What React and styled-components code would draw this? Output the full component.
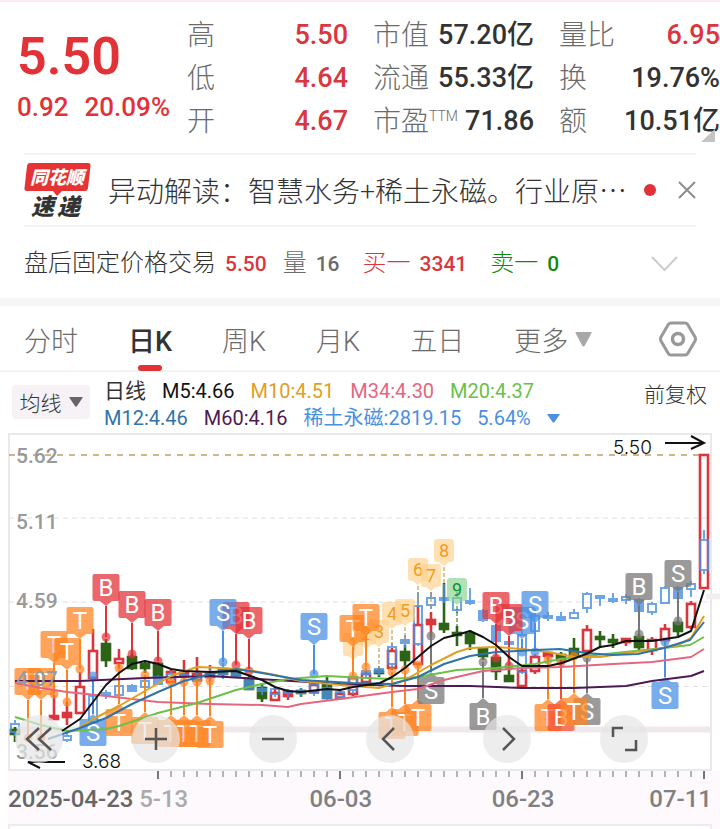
import React from 'react'
import styled, { createGlobalStyle, css } from 'styled-components'

const RED = '#e23237'
const UP = '#d9363e'
const DOWN = '#2c6316'
const BLUE = '#4a8fe2'
const ORANGE = '#ff8420'
const GREY = '#6b6b6b'
const INK = '#333'
const LINE = '#f3f3f3'

const GlobalStyle = createGlobalStyle`
  * {
    box-sizing: border-box;
  }
  body {
    margin: 0;
    background: #fff;
    color: ${INK};
    font-family: Roboto, 'Noto Sans CJK SC', sans-serif;
  }
  button {
    padding: 0;
    border: 0;
    background: none;
    color: inherit;
    font: inherit;
    cursor: pointer;
  }
`

const Page = styled.main`
  border-top: 2px solid #fdeaee;
  overflow: hidden;
`

const Quote = styled.section`
  display: grid;
  grid-template-columns: 145fr 161fr 161fr 161fr;
  column-gap: 25px;
  padding: 12px 0 10px 17px;
`

const PriceBox = styled.div`
  min-width: 0;
  color: ${RED};
  white-space: nowrap;
`

const Price = styled.h1`
  margin: 15px 0 0;
  font-size: 52px;
  line-height: 56px;
  font-weight: 600;
`

const Change = styled.p`
  display: flex;
  gap: 16px;
  margin: 6px 0 0;
  font-size: 26px;
  line-height: 32px;
  font-weight: 500;
`

const Stats = styled.dl`
  margin: 0;
`

const Stat = styled.div`
  display: flex;
  justify-content: space-between;
  height: 43px;
  line-height: 43px;
  white-space: nowrap;
`

const StatName = styled.dt`
  color: ${GREY};
  font-size: 28px;
  font-weight: 300;

  sup {
    font-size: 14px;
    line-height: 14px;
    vertical-align: 10px;
  }
`

const StatValue = styled.dd`
  margin: 0;
  color: ${(p) => (p.$up ? UP : INK)};
  font-size: 27px;
  font-weight: 500;
`

const Corner = styled.svg`
  position: absolute;
  right: 5px;
  top: 129px;
`

const News = styled.section`
  display: flex;
  align-items: center;
  height: 74px;
  margin: 0 24px;
  border-top: 2px solid ${LINE};
  border-bottom: 2px solid ${LINE};
`

const NewsText = styled.a`
  flex: 1;
  min-width: 0;
  margin-left: 17px;
  overflow: hidden;
  color: ${INK};
  font-family: 'Noto Sans CJK SC', sans-serif;
  font-size: 28px;
  line-height: 40px;
  font-weight: 300;
  white-space: nowrap;
  text-decoration: none;
`

const Dot = styled.span`
  width: 12px;
  height: 12px;
  margin: 0 22px 0 12px;
  border-radius: 50%;
  background: ${RED};
`

const IconButton = styled.button`
  display: flex;
  align-items: center;
  justify-content: center;
`

const AfterHours = styled.section`
  display: flex;
  align-items: center;
  height: 71px;
  padding: 2px 42px 0 24px;
  font-size: 24px;
  line-height: 32px;
  font-weight: 300;
  white-space: nowrap;

  b {
    font-size: 21px;
    font-weight: 500;
  }
`

const Field = styled.span`
  display: flex;
  align-items: baseline;
  gap: 9px;
  margin-right: ${(p) => (p.$wide ? 23 : 16)}px;
  color: ${(p) => p.$color};
`

const Amount = styled.b`
  color: ${(p) => p.$color};
`

const Band = styled.div`
  height: 8px;
  background: #f6f6f6;
`

const Tabs = styled.nav`
  display: flex;
  align-items: center;
  gap: 50px;
  height: 66px;
  padding: 2px 23px 0 24px;
  border-bottom: 2px solid ${LINE};
`

const Tab = styled.button`
  position: relative;
  display: flex;
  align-items: center;
  gap: 7px;
  height: 64px;
  color: ${GREY};
  font-size: 27px;
  font-weight: 300;
  white-space: nowrap;

  ${(p) =>
    p.$active &&
    css`
      color: ${INK};
      font-weight: 500;

      &::after {
        content: '';
        position: absolute;
        left: 50%;
        bottom: 0;
        width: 24px;
        height: 6px;
        margin-left: -12px;
        border-radius: 3px;
        background: ${RED};
      }
    `}
`

const Settings = styled(IconButton)`
  margin-left: auto;
`

const LegendBar = styled.section`
  display: flex;
  align-items: flex-start;
  height: 60px;
  padding: 6px 13px 0 12px;
`

const Indicator = styled.button`
  display: flex;
  flex: none;
  align-items: center;
  justify-content: center;
  gap: 7px;
  width: 78px;
  height: 34px;
  margin-top: 7px;
  border-radius: 4px;
  background: #f6f2f6;
  font-size: 21px;
  font-weight: 300;
`

const Averages = styled.div`
  flex: 1;
  margin-left: 14px;
  white-space: nowrap;
`

const AverageRow = styled.div`
  display: flex;
  align-items: center;
  gap: 16px;
  font-size: 20px;
  line-height: 27px;
`

const Average = styled.span`
  color: ${(p) => p.$color};
`

const Period = styled.span`
  font-size: 21px;
`

const Adjust = styled.button`
  height: 28px;
  font-size: 21px;
  font-weight: 300;
`

const ChartBox = styled.section`
  position: relative;
`

const ChartSvg = styled.svg`
  display: block;
  width: 100%;
  overflow: visible;
  font-family: Roboto, 'Noto Sans CJK SC', sans-serif;
`

const Controls = styled.div`
  position: absolute;
  left: 0;
  right: 0;
  bottom: 8px;
  display: flex;
  justify-content: space-between;
  padding: 0 72px 0 15px;
`

const RoundButton = styled(IconButton)`
  width: 48px;
  height: 48px;
  border-radius: 50%;
  background: rgba(230, 230, 230, 0.7);
`

const Axis = styled.footer`
  background: #fdf9fd;
  margin-left: 8px;
`

const Dates = styled.div`
  display: grid;
  grid-template-columns: 131fr 170fr 182fr 220fr;
  align-items: center;
  height: 40px;
  padding-right: 8px;
  color: #808080;
  font-size: 24px;
  line-height: 32px;
  font-weight: 500;
  white-space: nowrap;

  div {
    display: flex;
    justify-content: space-between;
  }
`

const DateText = styled.time`
  color: ${(p) => p.$color};
`

const NextPanel = styled.div`
  height: 5px;
  margin: 5px 8px 0 0;
  border: 2px solid #ececec;
  border-bottom: 0;
  background: #fff;
`

const STATS = [
  [
    ['高', '5.50', true],
    ['低', '4.64', true],
    ['开', '4.67', true],
  ],
  [
    ['市值', '57.20亿'],
    ['流通', '55.33亿'],
    ['市盈', '71.86'],
  ],
  [
    ['量比', '6.95', true],
    ['换', '19.76%'],
    ['额', '10.51亿'],
  ],
]

const TABS = ['分时', '日K', '周K', '月K', '五日']

const slot = (i) => 15 + 13 * i

// [slot, kind, high, body top, body bottom, low]; r: hollow rise, f: filled rise, g: fall
const CANDLES = [
  [0, 'g', 727, 730, 734, 742],
  [3, 'f', 695, 716, 719, 719],
  [4, 'f', 702, 713, 717, 725],
  [5, 'r', 672, 687, 713, 713],
  [6, 'r', 629, 651, 678, 678],
  [7, 'g', 639, 644, 660, 667],
  [8, 'r', 649, 659, 663, 669],
  [9, 'g', 652, 657, 668, 670],
  [10, 'g', 662, 664, 668, 673],
  [11, 'g', 662, 664, 676, 678],
  [12, 'r', 670, 672, 682, 684],
  [13, 'f', 660, 673, 676, 678],
  [14, 'r', 657, 674, 680, 682],
  [15, 'f', 665, 674, 677, 682],
  [16, 'g', 667, 670, 674, 678],
  [17, 'g', 668, 670, 675, 677],
  [18, 'g', 676, 679, 689, 690],
  [19, 'g', 683, 688, 698, 702],
  [20, 'r', 688, 693, 700, 701],
  [21, 'f', 689, 692, 696, 700],
  [22, 'g', 688, 691, 693, 697],
  [23, 'r', 682, 685, 692, 694],
  [24, 'g', 676, 685, 698, 699],
  [25, 'r', 690, 694, 698, 700],
  [26, 'r', 675, 678, 694, 696],
  [27, 'r', 670, 674, 682, 684],
  [28, 'g', 668, 671, 673, 677],
  [29, 'r', 648, 651, 668, 670],
  [30, 'g', 645, 652, 660, 668],
  [31, 'r', 606, 625, 664, 666],
  [32, 'f', 612, 620, 624, 637],
  [33, 'g', 583, 624, 629, 633],
  [34, 'g', 626, 633, 635, 646],
  [35, 'g', 630, 634, 643, 650],
  [36, 'g', 647, 649, 656, 660],
  [37, 'g', 655, 658, 671, 680],
  [38, 'g', 655, 676, 681, 682],
  [39, 'r', 669, 671, 686, 687],
  [40, 'r', 654, 657, 671, 674],
  [41, 'f', 652, 653, 656, 661],
  [42, 'g', 652, 655, 659, 662],
  [43, 'g', 638, 649, 655, 658],
  [44, 'r', 625, 630, 651, 655],
  [45, 'g', 631, 637, 639, 648],
  [46, 'g', 634, 640, 642, 648],
  [47, 'f', 638, 639, 642, 646],
  [48, 'g', 634, 637, 647, 650],
  [49, 'r', 637, 640, 650, 655],
  [50, 'r', 624, 629, 640, 642],
  [51, 'g', 620, 623, 631, 636],
  [52, 'r', 601, 604, 627, 629],
  [53, 'r', 455, 455, 588, 588],
]

// sector index overlay; h: hollow, s: solid
const SECTOR = [
  [0, 'h', 720, 724, 732, 736],
  [4, 'h', 733, 736, 740, 742],
  [6, 'h', 680, 696, 722, 724],
  [7, 's', 690, 693, 695, 699],
  [8, 'h', 682, 686, 695, 699],
  [9, 's', 684, 686, 691, 692],
  [10, 'h', 677, 681, 687, 690],
  [11, 's', 675, 677, 684, 685],
  [12, 'h', 671, 674, 678, 680],
  [13, 's', 670, 675, 677, 680],
  [14, 'h', 671, 677, 681, 684],
  [15, 's', 668, 675, 677, 680],
  [16, 's', 663, 670, 674, 679],
  [17, 's', 670, 672, 676, 678],
  [18, 's', 677, 679, 689, 690],
  [19, 's', 686, 689, 691, 695],
  [20, 'h', 687, 689, 694, 697],
  [21, 's', 689, 691, 693, 697],
  [22, 's', 688, 691, 693, 697],
  [23, 'h', 682, 684, 693, 696],
  [24, 's', 684, 688, 698, 700],
  [25, 'h', 689, 692, 697, 699],
  [26, 'h', 674, 677, 690, 694],
  [27, 's', 668, 671, 674, 678],
  [28, 's', 666, 669, 672, 676],
  [29, 'h', 643, 647, 664, 667],
  [30, 's', 635, 640, 643, 648],
  [31, 'h', 592, 606, 644, 646],
  [32, 'h', 592, 598, 605, 609],
  [33, 's', 584, 598, 600, 603],
  [34, 'h', 592, 598, 610, 613],
  [35, 's', 588, 601, 603, 605],
  [36, 's', 609, 611, 620, 622],
  [37, 's', 624, 626, 641, 643],
  [38, 's', 641, 642, 644, 645],
  [39, 'h', 631, 635, 672, 674],
  [40, 'h', 610, 616, 631, 633],
  [41, 's', 612, 616, 618, 621],
  [42, 's', 612, 617, 620, 621],
  [43, 'h', 609, 613, 618, 619],
  [44, 'h', 592, 594, 608, 613],
  [45, 's', 595, 596, 598, 606],
  [46, 's', 593, 599, 601, 603],
  [47, 'h', 594, 597, 600, 604],
  [48, 's', 598, 600, 611, 612],
  [49, 'h', 602, 604, 612, 615],
  [50, 'h', 586, 588, 603, 604],
  [51, 's', 586, 588, 598, 599],
  [52, 'h', 581, 584, 589, 597],
  [53, 'h', 530, 540, 570, 574],
]

const AVERAGES = [
  ['#4d1a55', '15,681 80,681 145,678 210,676 275,680 340,684 405,686 470,686 522,688 574,688 626,686 652,681 691,676 704,671'],
  ['#e5677f', '15,683 41,688 67,692 106,696 158,702 210,704 262,705 288,707 301,704 340,699 392,692 418,689 444,680 483,671 522,668 561,667 613,664 652,662 691,657 704,649'],
  ['#6cc04a', '15,717 41,725 67,731 106,729 119,726 158,713 197,703 236,690 262,684 288,679 327,676 366,678 392,679 418,677 457,670 496,668 535,664 561,659 586,656 625,652 664,648 690,645 704,637'],
  ['#e0a020', '80,727 93,719 119,706 145,691 171,676 197,667 223,668 249,670 275,675 301,681 340,685 379,688 405,680 431,665 457,652 470,648 496,647 522,649 548,652 574,657 600,657 626,653 652,650 678,645 691,638 704,616'],
  ['#2f74a8', '48,739 80,728 106,718 132,704 158,692 184,681 210,674 236,669 262,673 301,680 353,683 392,684 418,677 444,664 470,656 496,652 535,650 560,649 586,653 612,655 638,654 664,648 690,640 704,622'],
  ['#111', '62,731 80,719 93,702 106,685 119,673 132,664 145,661 158,664 171,669 184,671 210,672 236,671 262,680 275,687 288,691 301,692 327,689 340,690 353,687 380,683 392,677 405,668 418,657 431,646 444,638 460,634 470,631 483,637 496,645 509,657 522,666 548,666 562,663 586,654 600,647 613,645 626,641 652,641 678,637 691,631 704,590'],
]

// [slot, letter, colour, top of the tag, price end of the stem]
const TAGS = [
  [1, 'T', ORANGE, 668, 738],
  [2, 'T', ORANGE, 668, 738],
  [3, 'T', ORANGE, 631, 694],
  [4, 'T', ORANGE, 638, 702],
  [5, 'T', ORANGE, 607, 669],
  [6, 'S', BLUE, 719, 676],
  [8, 'T', ORANGE, 709, 668],
  [10, 'T', ORANGE, 717, 675],
  [12, 'T', ORANGE, 720, 682],
  [13, 'T', ORANGE, 720, 682],
  [14, 'T', ORANGE, 720, 682],
  [15, 'T', ORANGE, 721, 681],
  [7, 'B', RED, 574, 637],
  [9, 'B', RED, 591, 654],
  [11, 'B', RED, 599, 661],
  [17, 'B', RED, 602, 665],
  [16, 'S', BLUE, 599, 662],
  [18, 'B', RED, 607, 671],
  [23, 'S', BLUE, 613, 674],
  [26, 'T', ORANGE, 615, 676],
  [27, 'T', ORANGE, 604, 667],
  [29, 'T', ORANGE, 712, 672],
  [30, 'T', ORANGE, 709, 670],
  [31, 'T', ORANGE, 704, 665],
  [32, 'S', '#777', 677, 636],
  [36, 'B', '#777', 703, 662],
  [37, 'B', RED, 592, 658],
  [39, 'S', BLUE, 607, 652],
  [38, 'B', RED, 604, 666],
  [40, 'S', BLUE, 591, 652],
  [41, 'T', ORANGE, 704, 660],
  [42, 'B', '#f5502f', 704, 662],
  [44, 'S', '#777', 698, 658],
  [43, 'T', ORANGE, 698, 656],
  [48, 'B', '#777', 573, 634],
  [51, 'S', '#777', 560, 621],
  [50, 'S', BLUE, 682, 642],
]

const COUNTS = [
  [26, '1', 633, 675],
  [27, '2', 622, 668],
  [28, '3', 620, 670],
  [29, '4', 602, 648],
  [30, '5', 599, 645],
  [31, '6', 558, 606],
  [32, '7', 564, 610],
  [33, '8', 539, 585],
  [34, '9', 578, 634],
]

const PRICES = [
  ['5.62', 463],
  ['5.11', 529],
  ['4.59', 608],
  ['4.07', 686],
  ['3.56', 759],
]

const Candle = ({ x, color, width, stroke, hollow, high, top, bottom, low }) => (
  <g stroke={color} strokeWidth={stroke}>
    <path d={`M${x} ${high}V${top}M${x} ${bottom}V${low}`} />
    <rect
      x={x - width / 2}
      y={top}
      width={width}
      height={Math.max(bottom - top, 1)}
      fill={hollow ? 'none' : color}
    />
  </g>
)

const Tag = ({ x, letter, color, top, end }) => {
  const above = top < end
  const edge = above ? top + 27 : top
  const tip = above ? edge + 5 : edge - 5
  return (
    <g>
      <path d={`M${x} ${tip}V${end}`} stroke={color} strokeWidth="2" />
      <circle cx={x} cy={end} r="4.5" fill={color} opacity="0.7" />
      <rect x={x - 13.5} y={top} width="27" height="27" rx="2" fill={color} opacity="0.74" />
      <path d={`M${x - 6} ${edge}L${x} ${tip}L${x + 6} ${edge}Z`} fill={color} opacity="0.74" />
      <text x={x} y={top + 22} fill="#fff" fontSize="24" textAnchor="middle">
        {letter}
      </text>
    </g>
  )
}

const Count = ({ x, value, top, end }) => {
  const green = value === '9'
  const fill = green ? '#86d38f' : '#ffd08a'
  return (
    <g>
      <path
        d={`M${x} ${top + 28}V${end}`}
        stroke={green ? DOWN : '#b8902c'}
        strokeDasharray="4 2"
      />
      <rect x={x - 10} y={top} width="20" height="23" rx="3" fill={fill} opacity="0.65" />
      <path d={`M${x - 5} ${top + 23}l5 4l5 -4z`} fill={fill} opacity="0.65" />
      <text x={x} y={top + 18} fill={green ? '#12912c' : '#ee9c20'} fontSize="18" textAnchor="middle">
        {value}
      </text>
    </g>
  )
}

const Chart = () => (
  <ChartSvg viewBox="0 432 720 339" role="img" aria-label="日K线图">
    <g fill="none">
      <path d="M9 771V434H711V771M9 770H711" stroke="#e9e9ea" strokeWidth="2" />
      <path d="M9 518H711M9 602H711M9 686.5H711" stroke="#dededf" strokeDasharray="5 4" />
      <path d="M9 729.5H711" stroke="#efe9ee" strokeWidth="6" />
      <path d="M706 596.5H720" stroke="#f3eef2" strokeWidth="6" />
      <path d="M9 455H704" stroke="#c69c60" strokeWidth="1.5" strokeDasharray="6 6" />
    </g>

    {CANDLES.map(([i, kind, high, top, bottom, low]) => (
      <Candle
        key={i}
        x={slot(i)}
        color={kind === 'g' ? DOWN : UP}
        width={8}
        stroke={2.6}
        hollow={kind === 'r'}
        high={high}
        top={top}
        bottom={bottom}
        low={low}
      />
    ))}
    <g opacity="0.8">
      {SECTOR.map(([i, kind, high, top, bottom, low]) => (
        <Candle
          key={i}
          x={slot(i)}
          color={BLUE}
          width={8}
          stroke={2}
          hollow={kind === 'h'}
          high={high}
          top={top}
          bottom={bottom}
          low={low}
        />
      ))}
    </g>

    {COUNTS.map(([i, value, top, end]) => (
      <Count key={i} x={slot(i)} value={value} top={top} end={end} />
    ))}
    {TAGS.map(([i, letter, color, top, end]) => (
      <Tag key={i} x={slot(i)} letter={letter} color={color} top={top} end={end} />
    ))}
    {AVERAGES.map(([color, points]) => (
      <polyline
        key={color}
        points={points}
        fill="none"
        stroke={color}
        strokeWidth="2"
        strokeLinejoin="round"
      />
    ))}

    <g fill="#999" fontSize="21" fontWeight="500">
      {PRICES.map(([label, y]) => (
        <text key={label} x="16" y={y}>
          {label}
        </text>
      ))}
    </g>
    <g fill="#111" fontSize="19" fontFamily="Inter, sans-serif" fontWeight="300">
      <text x="613" y="454">
        5.50
      </text>
      <text x="82" y="768">
        3.68
      </text>
    </g>
    <g fill="none" stroke="#111" strokeWidth="2">
      <path d="M665 443H704M691 436L704 443L691 449" />
      <path d="M65 762H28L40 768" />
    </g>
  </ChartSvg>
)

const Caret = ({ width, height, color }) => (
  <svg width={width} height={height} viewBox="0 0 16 14" preserveAspectRatio="none" aria-hidden="true">
    <path d="M1 0H15Q16 0 15.5 1L9 13Q8 14 7 13L.5 1Q0 0 1 0Z" fill={color} />
  </svg>
)

const CONTROLS = [
  ['最早', 'M24 13L12 24L24 35M36 13L24 24L36 35'],
  ['放大', 'M13 24H35M24 13V35'],
  ['缩小', 'M13 24H35'],
  ['向左', 'M28 13L17 24L28 35'],
  ['向右', 'M20 13L31 24L20 35'],
  ['全屏', 'M13 22V13H23M36 25V35H25'],
]

const Ticks = () => (
  <ChartSvg viewBox="8 771 712 8" aria-hidden="true">
    {Array.from({ length: 43 }, (_, n) => (
      <path
        key={n}
        d={`M${158 + 13 * n} 771v${n % 14 === 0 ? 8 : 6}`}
        stroke={n % 14 === 0 ? '#777' : '#b5b3b5'}
        strokeWidth="2"
      />
    ))}
  </ChartSvg>
)

const App = () => {
  return (
    <Page>
      <GlobalStyle />

      <Quote>
        <PriceBox>
          <Price>5.50</Price>
          <Change>
            <span>0.92</span>
            <span>20.09%</span>
          </Change>
        </PriceBox>
        {STATS.map((group, n) => (
          <Stats key={n}>
            {group.map(([name, value, up]) => (
              <Stat key={name}>
                <StatName>
                  {name}
                  {name === '市盈' && <sup>TTM</sup>}
                </StatName>
                <StatValue $up={up}>{value}</StatValue>
              </Stat>
            ))}
          </Stats>
        ))}
      </Quote>
      <Corner width="14" height="13" aria-hidden="true">
        <path d="M14 0V13H0Z" fill="#c4c4c4" />
      </Corner>

      <News>
        <svg width="67" height="64" viewBox="0 -3 67 64" role="img" aria-label="同花顺速递">
          <path d="M6 2H64Q67 2 66.5 5L64 27Q63.5 30 61 30H38L33 35L29 30H3Q0 30 .5 27L3 5Q3.5 2 6 2Z" fill="#e63434" />
          <g fontFamily="'Noto Sans CJK SC', sans-serif" fontWeight="900" fontStyle="italic">
            <text x="6" y="23" fill="#fff" fontSize="18">
              同花顺
            </text>
            <text x="7" y="54" fill={INK} fontSize="23">
              速
            </text>
            <text x="33" y="54" fill={INK} fontSize="23">
              递
            </text>
          </g>
        </svg>
        <NewsText href="#news">异动解读：智慧水务+稀土永磁。行业原…</NewsText>
        <Dot />
        <IconButton aria-label="关闭">
          <svg width="18" height="18" viewBox="0 0 18 18">
            <path d="M1 1L17 17M17 1L1 17" stroke="#8c8c8c" strokeWidth="2" />
          </svg>
        </IconButton>
      </News>

      <AfterHours>
        <Field $color={INK}>
          盘后固定价格交易
          <Amount $color={UP}>5.50</Amount>
        </Field>
        <Field $color={GREY} $wide>
          量<Amount>16</Amount>
        </Field>
        <Field $color={UP} $wide>
          买一<Amount>3341</Amount>
        </Field>
        <Field $color="#128a12">
          卖一<Amount>0</Amount>
        </Field>
        <Settings aria-label="展开">
          <svg width="27" height="16" viewBox="0 0 27 16">
            <path d="M1 1L13.5 14L26 1" fill="none" stroke="#ccc" strokeWidth="2" />
          </svg>
        </Settings>
      </AfterHours>
      <Band />

      <Tabs>
        {TABS.map((name) => (
          <Tab key={name} $active={name === '日K'}>
            {name}
          </Tab>
        ))}
        <Tab>
          更多
          <Caret width={17} height={15} color="#a9a7aa" />
        </Tab>
        <Settings aria-label="设置">
          <svg width="38" height="36" viewBox="0 0 38 36" fill="none" stroke="#999" strokeWidth="3">
            <path d="M12 2H26Q28 2 29 4L36 16Q37 18 36 20L29 32Q28 34 26 34H12Q10 34 9 32L2 20Q1 18 2 16L9 4Q10 2 12 2Z" />
            <circle cx="19" cy="18" r="5.5" strokeWidth="3.5" />
          </svg>
        </Settings>
      </Tabs>

      <LegendBar>
        <Indicator>
          均线
          <Caret width={14} height={10} color="#666" />
        </Indicator>
        <Averages>
          <AverageRow>
            <Period>日线</Period>
            <Average $color="#111">M5:4.66</Average>
            <Average $color="#e0a020">M10:4.51</Average>
            <Average $color="#e5677f">M34:4.30</Average>
            <Average $color="#6cc04a">M20:4.37</Average>
          </AverageRow>
          <AverageRow>
            <Average $color="#2f74a8">M12:4.46</Average>
            <Average $color="#4d1a55">M60:4.16</Average>
            <Average $color={BLUE}>稀土永磁:2819.15</Average>
            <Average $color={BLUE}>5.64%</Average>
            <Caret width={13} height={9} color={BLUE} />
          </AverageRow>
        </Averages>
        <Adjust>前复权</Adjust>
      </LegendBar>

      <ChartBox>
        <Chart />
        <Controls>
          {CONTROLS.map(([label, d]) => (
            <RoundButton key={label} aria-label={label}>
              <svg width="48" height="48" viewBox="0 0 48 48" fill="none" stroke="#555" strokeWidth="2.5">
                <path d={d} />
              </svg>
            </RoundButton>
          ))}
        </Controls>
      </ChartBox>

      <Axis>
        <Ticks />
        <Dates>
          <DateText $color="#666">2025-04-23</DateText>
          <DateText $color="#aaa">5-13</DateText>
          <DateText>06-03</DateText>
          <div>
            <DateText>06-23</DateText>
            <DateText>07-11</DateText>
          </div>
        </Dates>
        <NextPanel />
      </Axis>
    </Page>
  )
}

export default App
